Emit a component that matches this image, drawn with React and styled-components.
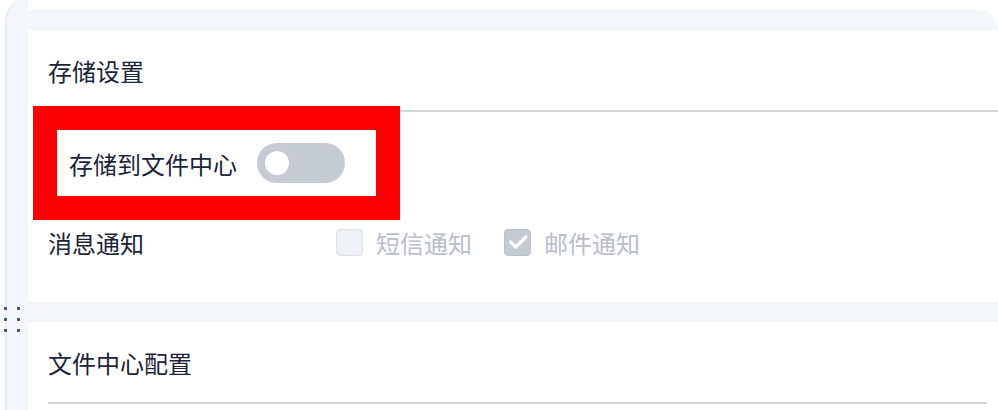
import React from "react";
import styled, { createGlobalStyle } from "styled-components";

// -----------------------------------
// Styled Components
// -----------------------------------

const GlobalStyle = createGlobalStyle`
  body {
    margin: 0;
    background: #ffffff;
    font-family: "Noto Sans CJK SC", "Noto Sans", sans-serif;
    overflow: hidden;
  }
`;

const Page = styled.div`
  display: flex;
  align-items: flex-start;
  width: 998px;
  height: 410px;
  padding-left: 5px;
  box-sizing: border-box;
  overflow: hidden;
`;

const Handle = styled.div`
  flex: 0 0 21px;
  height: 412px;
  background: #f5f6fa;
  border-left: 2px solid #e9ebf1;
  border-radius: 20px 0 0 20px;
  padding-top: 307px;
  box-sizing: content-box;
`;

const Grip = styled.div`
  display: grid;
  grid-template-columns: repeat(2, 3px);
  grid-auto-rows: 3px;
  column-gap: 10px;
  row-gap: 8px;
  margin-left: -3px;
`;

const Dot = styled.span`
  background: #4e5a7a;
`;

const Main = styled.div`
  flex: 1;
  margin-top: 10px;
  padding-top: 20px;
  display: flex;
  flex-direction: column;
  gap: 20px;
  background: #f5f6fa;
  border-top-right-radius: 20px;
`;

const Card = styled.section`
  background: #ffffff;
  padding-bottom: ${(p) => p.$bottom || 0}px;
`;

const CardHeader = styled.div`
  height: 80px;
  display: flex;
  align-items: center;
  margin-left: 20px;
  margin-right: ${(p) => p.$right || 0}px;
  border-bottom: 2px solid #d4d7dd;
  font-size: 24px;
  color: #1c2438;
`;

const CardBody = styled.div`
  padding: 18px 20px 0;
  display: flex;
  flex-direction: column;
  gap: 26px;
`;

const HighlightRow = styled.div`
  display: flex;
  align-items: center;
  gap: 20px;
  width: 319px;
  height: 66px;
  margin-left: 9px;
  padding: 0 12px;
  box-sizing: border-box;
  outline: 24px solid #ff0000;
`;

const Row = styled.div`
  display: flex;
  align-items: center;
  height: 40px;
`;

const Label = styled.span`
  font-size: 24px;
  color: #1c2438;
  width: ${(p) => (p.$width ? `${p.$width}px` : "auto")};
  flex-shrink: 0;
`;

const Toggle = styled.div`
  width: 88px;
  height: 40px;
  border-radius: 20px;
  background: #c6cbd3;
  display: flex;
  align-items: center;
  padding-left: 8px;
  box-sizing: border-box;
`;

const Knob = styled.span`
  width: 24px;
  height: 24px;
  border-radius: 50%;
  background: #ffffff;
`;

const CheckGroup = styled.div`
  display: flex;
  align-items: center;
  gap: 32px;
`;

const CheckItem = styled.label`
  display: flex;
  align-items: center;
  gap: 13px;
  font-size: 24px;
  color: #b9bdc8;
`;

const Box = styled.span`
  width: 27px;
  height: 27px;
  box-sizing: border-box;
  border-radius: 4px;
  border: 1px solid ${(p) => (p.$checked ? "#bcc1ca" : "#dde1e8")};
  background: ${(p) => (p.$checked ? "#c5c9d1" : "#eef0f4")};
  display: flex;
  align-items: center;
  justify-content: center;
`;

// -----------------------------------
// React Components
// -----------------------------------

const Checkbox = ({ checked, children }) => (
  <CheckItem>
    <Box $checked={checked}>
      {checked && (
        <svg width="22" height="22" viewBox="0 0 24 24" fill="none">
          <path
            d="M4 12l5.5 5.5L20.5 6.5"
            stroke="#ffffff"
            strokeWidth="3.6"
            strokeLinecap="round"
            strokeLinejoin="round"
          />
        </svg>
      )}
    </Box>
    {children}
  </CheckItem>
);

export default function App() {
  return (
    <>
      <GlobalStyle />
      <Page>
        <Handle>
          <Grip>
            {[0, 1, 2, 3, 4, 5].map((i) => (
              <Dot key={i} />
            ))}
          </Grip>
        </Handle>
        <Main>
          <Card $bottom={40}>
            <CardHeader>存储设置</CardHeader>
            <CardBody>
              <HighlightRow>
                <Label>存储到文件中心</Label>
                <Toggle>
                  <Knob />
                </Toggle>
              </HighlightRow>
              <Row>
                <Label $width={288}>消息通知</Label>
                <CheckGroup>
                  <Checkbox>短信通知</Checkbox>
                  <Checkbox checked>邮件通知</Checkbox>
                </CheckGroup>
              </Row>
            </CardBody>
          </Card>
          <Card>
            <CardHeader $right={11}>文件中心配置</CardHeader>
          </Card>
        </Main>
      </Page>
    </>
  );
}
